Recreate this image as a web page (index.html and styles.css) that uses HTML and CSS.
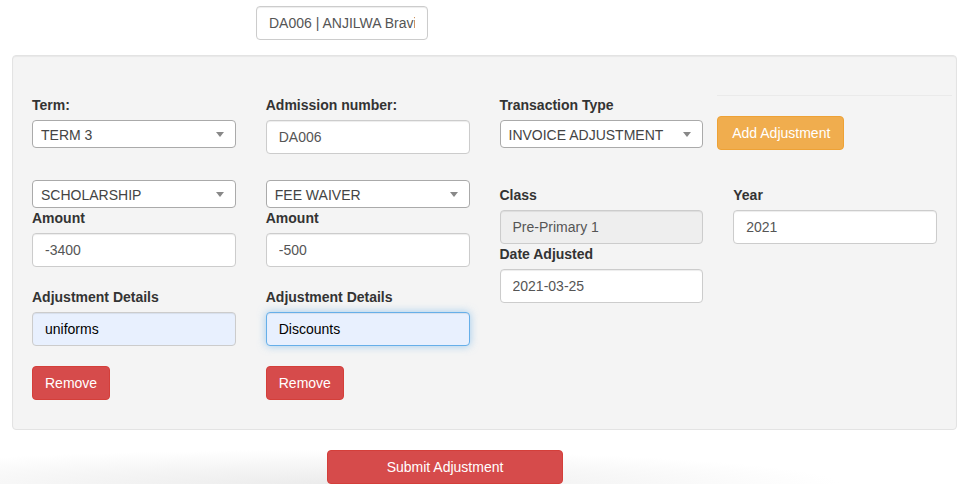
FILE: index.html
```html
<!DOCTYPE html>
<html lang="en">
<head>
<meta charset="utf-8">
<title>Invoice Adjustment</title>
<link rel="stylesheet" href="styles.css">
</head>
<body>
<div class="top">
  <input class="form-control student" type="text" value="DA006 | ANJILWA Bravin Omondi" readonly>
</div>
<div class="well">
  <div class="row row-first">
    <div class="col">
      <label class="lbl">Term:</label>
      <div class="select2"><span class="sel-text">TERM 3</span><span class="arrow"></span></div>
    </div>
    <div class="col">
      <label class="lbl">Admission number:</label>
      <input class="form-control" type="text" value="DA006">
    </div>
    <div class="col">
      <label class="lbl">Transaction Type</label>
      <div class="select2"><span class="sel-text">INVOICE ADJUSTMENT</span><span class="arrow"></span></div>
    </div>
    <div class="col col-flush">
      <hr class="rule">
      <button class="btn btn-warning btn-add" type="button">Add Adjustment</button>
    </div>
  </div>
  <div class="row row-second">
    <div class="col">
      <div class="select2"><span class="sel-text">SCHOLARSHIP</span><span class="arrow"></span></div>
      <label class="lbl">Amount</label>
      <input class="form-control" type="text" value="-3400">
      <label class="lbl gap">Adjustment Details</label>
      <input class="form-control autofill" type="text" value="uniforms">
      <button class="btn btn-danger gap" type="button">Remove</button>
    </div>
    <div class="col">
      <div class="select2"><span class="sel-text">FEE WAIVER</span><span class="arrow"></span></div>
      <label class="lbl">Amount</label>
      <input class="form-control" type="text" value="-500">
      <label class="lbl gap">Adjustment Details</label>
      <input class="form-control autofill focused" type="text" value="Discounts">
      <button class="btn btn-danger gap" type="button">Remove</button>
    </div>
    <div class="col col-inset">
      <label class="lbl">Class</label>
      <input class="form-control" type="text" value="Pre-Primary 1" disabled>
      <label class="lbl">Date Adjusted</label>
      <input class="form-control" type="text" value="2021-03-25">
    </div>
    <div class="col col-inset">
      <label class="lbl">Year</label>
      <input class="form-control" type="text" value="2021">
    </div>
  </div>
</div>
<div class="footer">
  <button class="btn btn-danger btn-submit" type="button">Submit Adjustment</button>
</div>
</body>
</html>
```
FILE: styles.css
```css
* { box-sizing: border-box; }
html, body { margin: 0; padding: 0; background: #fff; }
body {
  font-family: "Liberation Sans", Arial, sans-serif;
  font-size: 14px;
  line-height: 20px;
  color: #333;
  overflow: hidden;
}
.top { padding: 6px 0 0 256px; }
.form-control {
  display: block;
  width: 100%;
  height: 34px;
  padding: 6px 12px;
  font-family: inherit;
  font-size: 14px;
  line-height: 20px;
  color: #555;
  background: #fff;
  border: 1px solid #ccc;
  border-radius: 4px;
  box-shadow: inset 0 1px 1px rgba(0,0,0,.075);
  outline: none;
  margin: 0;
}
.form-control.student { width: 172px; }
.form-control:disabled { background: #eee; color: #555; opacity: 1; -webkit-text-fill-color: #555; }
.form-control.autofill { background: #e8f0fe; color: #000; }
.form-control.focused {
  border-color: #66afe9;
  box-shadow: inset 0 1px 1px rgba(0,0,0,.075), 0 0 8px rgba(102,175,233,.6);
}
.well {
  margin: 15px 7px 0 12px;
  padding: 19px;
  background: #f4f4f4;
  border: 1px solid #e3e3e3;
  border-radius: 4px;
  box-shadow: inset 0 1px 1px rgba(0,0,0,.05);
}
.row {
  display: grid;
  grid-template-columns: repeat(4, 1fr);
  margin: 0 -15px;
}
.row-first { padding-top: 20px; }
.row-second { margin-top: 26px; padding-bottom: 10px; }
.col { padding: 0 15px; min-width: 0; }
.col-flush { padding: 0 0 0 0; margin-left: -1px; }
.col-inset { padding-top: 5px; }
.lbl {
  display: block;
  font-weight: bold;
  margin-bottom: 5px;
  line-height: 20px;
}
.gap { margin-top: 20px; }
.select2 {
  position: relative;
  height: 28px;
  background: #fff;
  border: 1px solid #aaa;
  border-radius: 4px;
  padding-left: 8px;
  line-height: 28px;
  color: #444;
  white-space: nowrap;
  overflow: hidden;
}
.select2 .arrow {
  position: absolute;
  right: 11px;
  top: 11px;
  width: 0;
  height: 0;
  border-style: solid;
  border-width: 5px 4px 0 4px;
  border-color: #888 transparent transparent transparent;
}
.rule {
  margin: 0 0 20px;
  border: 0;
  border-top: 1px solid #eaeaea;
  height: 0;
}
.btn {
  display: inline-block;
  height: 34px;
  padding: 6px 12px;
  font-family: inherit;
  font-size: 14px;
  line-height: 20px;
  color: #fff;
  border: 1px solid transparent;
  border-radius: 4px;
  cursor: pointer;
  white-space: nowrap;
}
.btn-add { padding: 6px 13px 6px 14px; }
.btn-warning { background: #f0ad4e; border-color: #eea236; }
.btn-danger { background: #d64b4b; border-color: #d43f3a; }
.col .btn-danger.gap { display: block; }
.footer {
  height: 54px;
  padding: 20px 0 0 327px;
  background: radial-gradient(ellipse 520px 34px at 320px 100%, #ececec 0%, #f4f4f4 45%, #ffffff 100%);
}
.btn-submit { width: 236px; }
```
